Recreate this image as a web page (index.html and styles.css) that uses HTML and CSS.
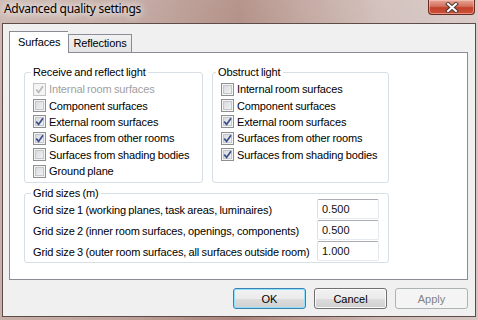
FILE: index.html
```html
<!DOCTYPE html>
<html lang="en">
	<head>
		<meta charset="UTF-8" />
		<title>Advanced quality settings</title>
		<link rel="stylesheet" href="styles.css">
	</head>
	<body>
		<div class="window">
			<div class="titlebar">
				<span class="title">Advanced quality settings</span>
				<span class="close">
					<svg width="14" height="11" viewBox="0 0 14 11">
						<path d="M3 2 L11 9 M11 2 L3 9" stroke="#4a3a3a" stroke-width="4" stroke-linecap="square" fill="none" />
						<path d="M3 2 L11 9 M11 2 L3 9" stroke="#ffffff" stroke-width="2" stroke-linecap="square" fill="none" />
					</svg>
				</span>
			</div>

			<div class="client">
				<div class="tabs">
					<div class="tab active">Surfaces</div>
					<div class="tab">Reflections</div>
				</div>

				<div class="panel">
					<div class="groups">
						<fieldset class="group group-light">
							<legend>Receive and reflect light</legend>
							<label class="check disabled"><span class="cb"><svg width="9" height="9" viewBox="0 0 9 9"><path d="M1.2 4.6 L3.6 7.4 L8 1.2" /></svg></span>Internal room surfaces</label>
							<label class="check"><span class="cb"></span>Component surfaces</label>
							<label class="check"><span class="cb"><svg width="9" height="9" viewBox="0 0 9 9"><path d="M1.2 4.6 L3.6 7.4 L8 1.2" /></svg></span>External room surfaces</label>
							<label class="check"><span class="cb"><svg width="9" height="9" viewBox="0 0 9 9"><path d="M1.2 4.6 L3.6 7.4 L8 1.2" /></svg></span>Surfaces from other rooms</label>
							<label class="check"><span class="cb"></span>Surfaces from shading bodies</label>
							<label class="check"><span class="cb"></span>Ground plane</label>
						</fieldset>

						<fieldset class="group group-obstruct">
							<legend>Obstruct light</legend>
							<label class="check"><span class="cb"></span>Internal room surfaces</label>
							<label class="check"><span class="cb"></span>Component surfaces</label>
							<label class="check"><span class="cb"><svg width="9" height="9" viewBox="0 0 9 9"><path d="M1.2 4.6 L3.6 7.4 L8 1.2" /></svg></span>External room surfaces</label>
							<label class="check"><span class="cb"><svg width="9" height="9" viewBox="0 0 9 9"><path d="M1.2 4.6 L3.6 7.4 L8 1.2" /></svg></span>Surfaces from other rooms</label>
							<label class="check"><span class="cb"><svg width="9" height="9" viewBox="0 0 9 9"><path d="M1.2 4.6 L3.6 7.4 L8 1.2" /></svg></span>Surfaces from shading bodies</label>
						</fieldset>
					</div>

					<fieldset class="group group-grid">
						<legend>Grid sizes (m)</legend>
						<div class="grid-row">
							<span class="grid-label">Grid size 1 (working planes, task areas, luminaires)</span>
							<input class="field" type="text" value="0.500">
						</div>
						<div class="grid-row">
							<span class="grid-label">Grid size 2 (inner room surfaces, openings, components)</span>
							<input class="field" type="text" value="0.500">
						</div>
						<div class="grid-row">
							<span class="grid-label">Grid size 3 (outer room surfaces, all surfaces outside room)</span>
							<input class="field" type="text" value="1.000">
						</div>
					</fieldset>
				</div>

				<div class="buttons">
					<button class="btn btn-default">OK</button>
					<button class="btn">Cancel</button>
					<button class="btn" disabled>Apply</button>
				</div>
			</div>
		</div>
	</body>
</html>
```

FILE: styles.css
```css
* { margin: 0; padding: 0; box-sizing: border-box; }
body {
	font-family: "Liberation Sans", Arial, sans-serif;
	font-size: 11px;
	letter-spacing: -0.12px;
	word-spacing: -0.6px;
	color: #000;
	background: #fff;
}
.window {
	width: 478px;
	height: 320px;
	padding: 0 2px 3px 2px;
	background:
		linear-gradient(180deg, rgba(255, 255, 255, 0.15), rgba(255, 255, 255, 0) 40%),
		linear-gradient(90deg, #c7b0a9 0%, #bea39b 25%, #a98379 50%, #b99a91 62%, #cdb9b4 80%, #d4c5c1 100%);
}
.titlebar {
	height: 23px;
	display: flex;
	justify-content: space-between;
	align-items: flex-start;
}
.title {
	font-family: "Noto Sans", "Liberation Sans", sans-serif;
	font-size: 12px;
	letter-spacing: -0.3px;
	word-spacing: 0;
	line-height: 16px;
	padding: 1px 0 0 2px;
	color: #000;
	text-shadow: 0 0 6px rgba(255, 255, 255, 0.9), 0 0 10px rgba(255, 255, 255, 0.8), 0 0 14px rgba(255, 255, 255, 0.6);
}
.close {
	width: 47px;
	height: 15px;
	margin-right: 1px;
	display: flex;
	align-items: center;
	justify-content: center;
	border: 1px solid #6a2b22;
	border-top: none;
	border-radius: 0 0 4px 4px;
	background: linear-gradient(180deg, #e7a697 0%, #d3705d 45%, #c1412b 55%, #d0523a 100%);
	box-shadow: inset 0 0 0 1px rgba(255, 210, 200, 0.5);
}
.client {
	height: 294px;
	border: 1px solid #5e4c48;
	background: #f0f0f0;
}
.tabs {
	display: flex;
	align-items: flex-end;
	margin: 7px 0 0 6px;
}
.tab {
	height: 18px;
	padding: 0 4px 0 4px;
	border: 1px solid #898c95;
	border-bottom: none;
	line-height: 17px;
	background: linear-gradient(180deg, #f2f2f2, #e3e3e3);
}
.tab.active {
	position: relative;
	z-index: 1;
	height: 22px;
	margin-bottom: -1px;
	padding: 0 8px;
	line-height: 20px;
	background: #fff;
	border-right: none;
}
.panel {
	height: 228px;
	margin: 0 7px 0 6px;
	padding: 13px 0 0 14px;
	border: 1px solid #898c95;
	background: #fff;
}
.groups {
	display: flex;
	gap: 9px;
}
.group {
	border: 1px solid #d5dfe5;
	border-radius: 3px;
	padding: 0 8px;
	min-width: 0;
}
.group legend {
	padding: 0 2px;
	margin-left: -2px;
	line-height: 13px;
}
.group-light {
	width: 179px;
	height: 117px;
	padding-top: 2px;
}
.group-obstruct {
	width: 177px;
	height: 117px;
	padding-top: 2px;
	padding-left: 8px;
}
.group-obstruct legend {
	margin-left: -5px;
}
.check {
	display: flex;
	align-items: center;
	gap: 3px;
	height: 16.4px;
	white-space: nowrap;
}
.check.disabled {
	color: #a0a0a0;
}
.cb {
	width: 13px;
	height: 13px;
	flex: none;
	display: flex;
	align-items: center;
	justify-content: center;
	border: 1px solid #8e8f8f;
	background: linear-gradient(135deg, #d2d5da, #f7f7f7);
	box-shadow: inset 0 0 0 1px #f4f4f4, inset 0 0 0 2px #c3c7cc;
}
.cb path {
	fill: none;
	stroke: #3a4f8a;
	stroke-width: 1.7;
}
.check.disabled .cb {
	border-color: #c4c4c4;
	background: #f4f4f4;
	box-shadow: none;
}
.check.disabled .cb path {
	stroke: #b9b9b9;
}
.group-grid {
	width: 365px;
	margin-top: 4px;
	padding: 0 9px 0 8px;
}
.grid-row {
	display: flex;
	align-items: center;
	justify-content: space-between;
	height: 21px;
}
.grid-label {
	white-space: nowrap;
}
.grid-row:first-of-type {
	margin-top: -1px;
}
.field {
	width: 62px;
	height: 20px;
	align-self: flex-start;
	padding-left: 4px;
	font: inherit;
	letter-spacing: 0;
	color: #111;
	border: 1px solid #e3e9ef;
	border-top-color: #abadb3;
	border-left-color: #dbdfe6;
	border-radius: 2px;
	background: #fff;
	outline: none;
}
.buttons {
	display: flex;
	justify-content: flex-end;
	gap: 8px;
	margin-top: 8px;
	padding-right: 7px;
}
.btn {
	width: 73px;
	height: 21px;
	font: inherit;
	letter-spacing: 0;
	color: #000;
	border: 1px solid #707070;
	border-radius: 3px;
	background: linear-gradient(180deg, #f2f2f2 0%, #ebebeb 50%, #dddddd 51%, #cfcfcf 100%);
	box-shadow: inset 0 0 0 1px #fbfbfb;
}
.btn-default {
	border-color: #3c7fb1;
	box-shadow: inset 0 0 0 1px #8fe2fb;
}
.btn:disabled {
	color: #838383;
	border-color: #adb2b5;
	background: #f4f4f4;
	box-shadow: none;
}
```
